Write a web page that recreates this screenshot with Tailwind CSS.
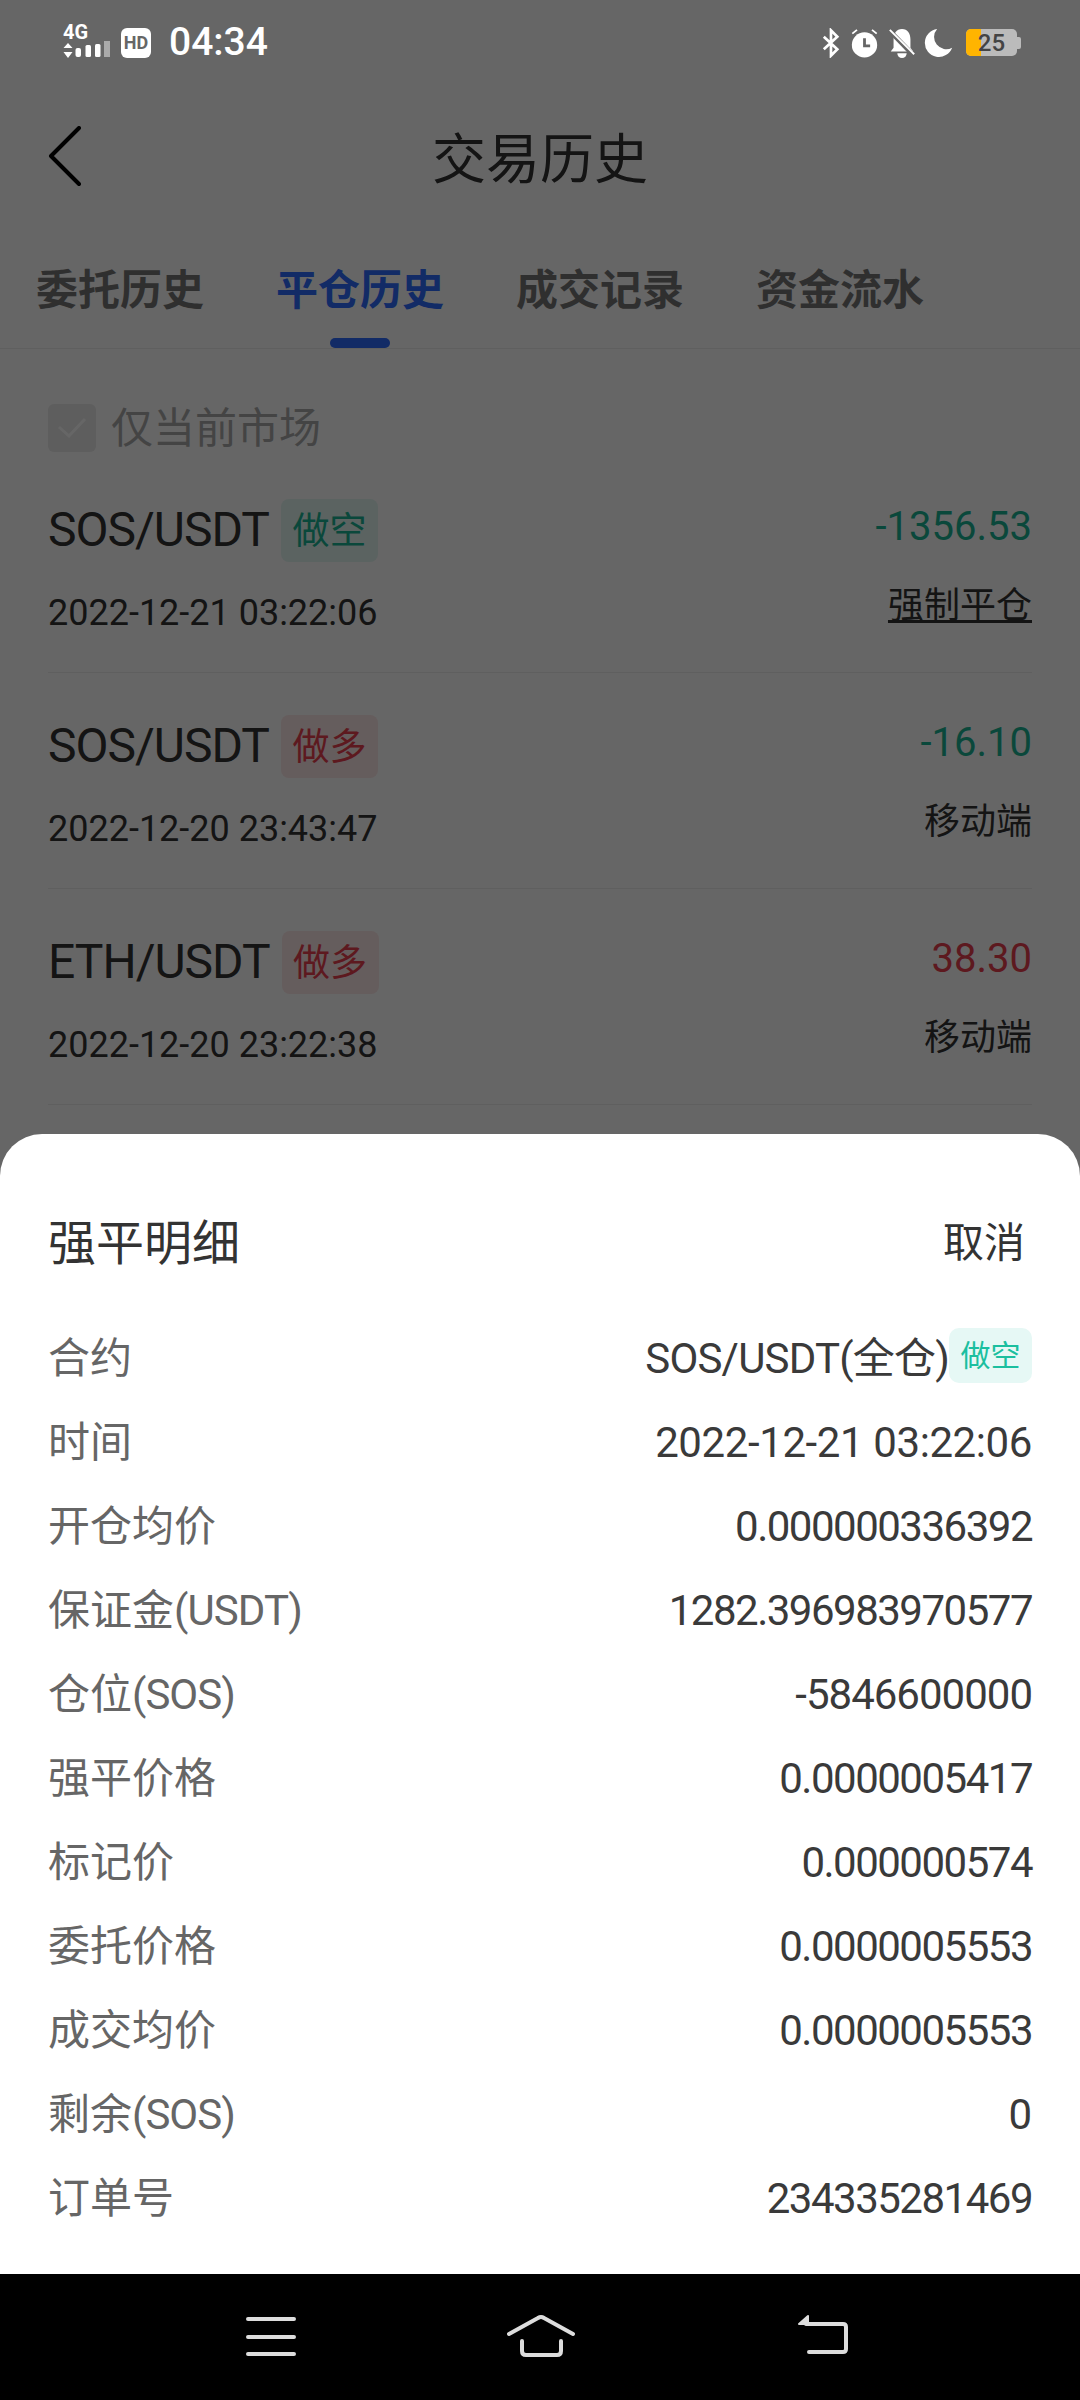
<!DOCTYPE html>
<html lang="zh">
<head>
<meta charset="UTF-8">
<script src="https://cdn.jsdelivr.net/npm/@tailwindcss/browser@4"></script>
<title>交易历史</title>
</head>
<body class="bg-white">
<div class="relative w-[1080px] h-[2400px] overflow-hidden font-['Roboto','Noto_Sans_CJK_SC',sans-serif]">
  <!-- page behind the sheet -->
  <div class="h-[90px]"></div>
  <div class="h-[134px] flex items-center justify-center relative">
    <svg class="absolute left-[47px] top-[36px]" width="36" height="62" viewBox="0 0 36 62" fill="none" stroke="#000" stroke-width="4" stroke-linecap="round" stroke-linejoin="round"><path d="M32 2 4 30l28 28"/></svg>
    <span class="text-[54px] text-[#333] mt-[6px]">交易历史</span>
  </div>
  <div class="h-[125px] pl-[36px] pt-[32px] flex gap-[72px] border-b border-[#eee]">
    <div class="w-[168px] text-[42px] leading-[70px] font-bold text-[#777]">委托历史</div>
    <div class="relative w-[168px] text-[42px] leading-[70px] font-bold text-[#2d6bff]">平仓历史
      <div class="absolute left-[54px] top-[82px] w-[60px] h-[10px] rounded-full bg-[#2d6bff]"></div>
    </div>
    <div class="w-[168px] text-[42px] leading-[70px] font-bold text-[#777]">成交记录</div>
    <div class="w-[168px] text-[42px] leading-[70px] font-bold text-[#777]">资金流水</div>
  </div>
  <div class="px-[48px]">
    <div class="flex items-center gap-[15px] h-[130px] pt-[28px]">
      <div class="w-[48px] h-[48px] rounded-[6px] bg-[#ebebeb] flex items-center justify-center">
        <svg width="30" height="22" viewBox="0 0 30 22" fill="none" stroke="#fff" stroke-width="3"><path d="M2 10l10 9L28 2"/></svg>
      </div>
      <span class="text-[42px] text-[#aaa]">仅当前市场</span>
    </div>
    <div class="h-[194px] border-b border-[#eee] pt-[19px]">
      <div class="flex justify-between items-start">
        <div class="flex items-center gap-[12px] h-[64px]">
          <span class="text-[48px] tracking-[-1px] text-[#333]">SOS/USDT</span>
          <span class="w-[97px] h-[63px] pt-[3px] rounded-[8px] bg-[#e3f7f3] text-[#1bb394] text-[37px] flex items-center justify-center">做空</span>
        </div>
        <span class="text-[40px] text-[#1bb394] leading-[64px] -mt-[3px]">-1356.53</span>
      </div>
      <div class="flex justify-between items-start mt-[24px]">
        <span class="text-[36px] text-[#333]">2022-12-21 03:22:06</span>
        <span class="text-[36px] text-[#333] underline -mt-[7px]">强制平仓</span>
      </div>
    </div>
    <div class="h-[216px] border-b border-[#eee] pt-[41px]">
      <div class="flex justify-between items-start">
        <div class="flex items-center gap-[12px] h-[64px]">
          <span class="text-[48px] tracking-[-1px] text-[#333]">SOS/USDT</span>
          <span class="w-[97px] h-[63px] pt-[3px] rounded-[8px] bg-[#fde8e8] text-[#e8404f] text-[37px] flex items-center justify-center">做多</span>
        </div>
        <span class="text-[40px] text-[#1bb394] leading-[64px] -mt-[3px]">-16.10</span>
      </div>
      <div class="flex justify-between items-start mt-[24px]">
        <span class="text-[36px] text-[#333]">2022-12-20 23:43:47</span>
        <span class="text-[36px] text-[#333] -mt-[7px]">移动端</span>
      </div>
    </div>
    <div class="h-[216px] border-b border-[#eee] pt-[41px]">
      <div class="flex justify-between items-start">
        <div class="flex items-center gap-[12px] h-[64px]">
          <span class="text-[48px] tracking-[-1px] text-[#333]">ETH/USDT</span>
          <span class="w-[97px] h-[63px] pt-[3px] rounded-[8px] bg-[#fde8e8] text-[#e8404f] text-[37px] flex items-center justify-center">做多</span>
        </div>
        <span class="text-[40px] text-[#e8404f] leading-[64px] -mt-[3px]">38.30</span>
      </div>
      <div class="flex justify-between items-start mt-[24px]">
        <span class="text-[36px] text-[#333]">2022-12-20 23:22:38</span>
        <span class="text-[36px] text-[#333] -mt-[7px]">移动端</span>
      </div>
    </div>
  </div>

  <!-- dim overlay -->
  <div class="absolute inset-0 bg-black/60"></div>

  <!-- status bar -->
  <div class="absolute left-0 top-0 w-full h-[85px] flex items-center justify-between pl-[63px] pr-[59px] text-white">
    <div class="flex items-center">
      <div class="relative w-[47px] h-[34px]">
        <span class="absolute left-0 -top-[6px] text-[20px] font-bold leading-[24px]">4G</span>
        <svg class="absolute left-0 top-[15px]" width="47" height="18" viewBox="0 0 47 18" fill="#fff"><path d="M5 2l4.500 5h-9zM5 17l4.500-6h-9z"/><rect x="12.500" y="7" width="5.500" height="9" rx="2"/><rect x="22.500" y="4" width="5.500" height="12" rx="1.500"/><rect x="32" y="3" width="5.500" height="13" rx="1.500"/><rect x="41" y="0" width="6" height="16" fill="#aaa"/></svg>
      </div>
      <span class="w-[30px] h-[30px] ml-[11px] rounded-[6px] bg-white text-[#666] text-[18px] font-bold flex items-center justify-center">HD</span>
      <span class="text-[39px] font-medium ml-[18px]">04:34</span>
    </div>
    <div class="flex items-center">
      <svg width="18" height="30" viewBox="0 0 20 32" fill="none" stroke="#fff" stroke-width="3"><path d="M2 9l15 14-7 7V2l7 7L2 23"/></svg>
      <svg class="ml-[10px]" width="29" height="30" viewBox="0 0 30 32"><circle cx="15" cy="18" r="13.500" fill="#fff"/><path d="M15 11v8h6" fill="none" stroke="#666" stroke-width="3"/><path d="M2 6l5-4M28 6l-5-4" stroke="#fff" stroke-width="2"/></svg>
      <svg class="ml-[9px]" width="28" height="30" viewBox="0 0 28 32"><path d="M14 1c6 0 9 5 9 11v9l3 4H2l3-4v-9C5 6 8 1 14 1z" fill="#fff"/><path d="M9 27h10a5 5 0 0 1-10 0z" fill="#fff"/><path d="M1 3l25 26" stroke="#666" stroke-width="5"/><path d="M1 2l26 26" stroke="#fff" stroke-width="2"/></svg>
      <svg class="ml-[8px]" width="30" height="30" viewBox="0 0 30 32"><path d="M13 1A15 15 0 1 0 29 21 13 13 0 0 1 13 1z" fill="#fff"/></svg>
      <div class="relative ml-[12px] w-[51px] h-[27px] rounded-[5px] bg-[#bbb] flex items-center justify-center">
        <div class="absolute left-0 top-0 h-full w-[15px] rounded-l-[5px] bg-[#ffb400]"></div>
        <span class="relative text-[24px] text-[#444] font-medium leading-none">25</span>
      </div>
      <div class="w-[4px] h-[12px] rounded-r-[2px] bg-[#bbb]"></div>
    </div>
  </div>

  <!-- liquidation detail sheet -->
  <div class="absolute left-0 top-[1134px] w-full h-[1140px] bg-white rounded-t-[42px] px-[48px]">
    <div class="flex items-center justify-between h-[110px] mt-[55px]">
      <span class="text-[48px] text-[#333]">强平明细</span>
      <span class="text-[41px] text-[#333] mr-[7px]">取消</span>
    </div>
    <div class="flex flex-col mt-[17px] text-[42px]">
      <div class="flex justify-between items-center h-[84px]"><span class="text-[#666]">合约</span><span class="flex items-center text-[#3a3a3a]"><span class="tracking-[-0.8px]">SOS/USDT(全仓)</span><span class="w-[83px] h-[55px] -mt-[6px] rounded-[10px] bg-[#e6f8f5] text-[#1bbf9f] text-[30px] flex items-center justify-center">做空</span></span></div>
      <div class="flex justify-between items-center h-[84px]"><span class="text-[#666]">时间</span><span class="text-[#3a3a3a] tracking-[-0.4px]">2022-12-21 03:22:06</span></div>
      <div class="flex justify-between items-center h-[84px]"><span class="text-[#666]">开仓均价</span><span class="text-[#3a3a3a] tracking-[-1.5px]">0.000000336392</span></div>
      <div class="flex justify-between items-center h-[84px]"><span class="text-[#666]">保证金<span class="tracking-[-0.9px]">(USDT)</span></span><span class="text-[#3a3a3a] tracking-[-1.5px]">1282.396983970577</span></div>
      <div class="flex justify-between items-center h-[84px]"><span class="text-[#666]">仓位<span class="tracking-[-1px]">(SOS)</span></span><span class="text-[#3a3a3a] tracking-[-1px]">-5846600000</span></div>
      <div class="flex justify-between items-center h-[84px]"><span class="text-[#666]">强平价格</span><span class="text-[#3a3a3a] tracking-[-1.5px]">0.0000005417</span></div>
      <div class="flex justify-between items-center h-[84px]"><span class="text-[#666]">标记价</span><span class="text-[#3a3a3a] tracking-[-1.5px]">0.000000574</span></div>
      <div class="flex justify-between items-center h-[84px]"><span class="text-[#666]">委托价格</span><span class="text-[#3a3a3a] tracking-[-1.5px]">0.0000005553</span></div>
      <div class="flex justify-between items-center h-[84px]"><span class="text-[#666]">成交均价</span><span class="text-[#3a3a3a] tracking-[-1.5px]">0.0000005553</span></div>
      <div class="flex justify-between items-center h-[84px]"><span class="text-[#666]">剩余<span class="tracking-[-1px]">(SOS)</span></span><span class="text-[#3a3a3a]">0</span></div>
      <div class="flex justify-between items-center h-[84px]"><span class="text-[#666]">订单号</span><span class="text-[#3a3a3a] tracking-[-1.5px]">234335281469</span></div>
    </div>
  </div>

  <!-- nav bar -->
  <div class="absolute left-0 bottom-0 w-full h-[126px] bg-black flex items-start pt-[38px] pl-[244px]">
    <svg width="54" height="46" viewBox="0 0 54 46" stroke="#ddd" stroke-width="4" stroke-linecap="round"><path d="M4 7h46M4 25h46M4 42h46"/></svg>
    <svg class="ml-[207px]" width="72" height="46" viewBox="0 0 72 46" fill="none" stroke="#ddd" stroke-width="4" stroke-linecap="round" stroke-linejoin="round"><path d="M4 22 33 6q3-2 6 0l29 16"/><path d="M17 29v10q0 4 4 4h31q4 0 4-4V29"/></svg>
    <svg class="ml-[219px]" width="54" height="46" viewBox="0 0 54 46" fill="none" stroke="#ddd" stroke-width="4" stroke-linecap="round" stroke-linejoin="round"><path d="M10 12h37q3 0 3 3v22q0 3-3 3H13"/><path d="M3 12l9-8v8z" fill="#ddd" stroke-width="2"/></svg>
  </div>
</div>
</body>
</html>
